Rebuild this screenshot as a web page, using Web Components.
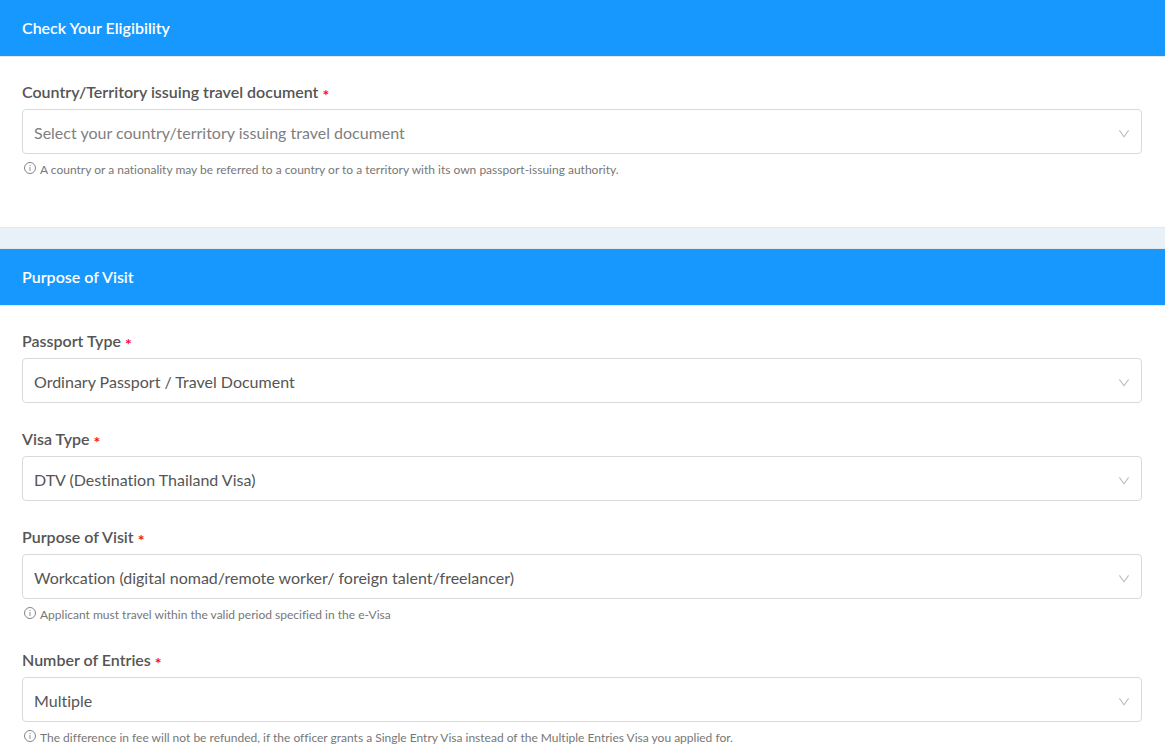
<!DOCTYPE html>
<html lang="en">
<head>
<meta charset="utf-8">
<meta name="viewport" content="width=device-width, initial-scale=1">
<title>Check Your Eligibility</title>
<style>
  body { margin: 0; background: #e8f0f8; font-family: Lato, "Noto Sans", sans-serif; font-size: 16px; font-variant-ligatures: none; color: #555; }
</style>
</head>
<body>
<visa-form>
  <form-card heading="Check Your Eligibility">
    <select-field label="Country/Territory issuing travel document" placeholder="Select your country/territory issuing travel document">A country or a nationality may be referred to a country or to a territory with its own passport-issuing authority.</select-field>
  </form-card>
  <form-card heading="Purpose of Visit">
    <select-field label="Passport Type" value="Ordinary Passport / Travel Document"></select-field>
    <select-field label="Visa Type" value="DTV (Destination Thailand Visa)"></select-field>
    <select-field label="Purpose of Visit" value="Workcation (digital nomad/remote worker/ foreign talent/freelancer)">Applicant must travel within the valid period specified in the e-Visa</select-field>
    <select-field label="Number of Entries" value="Multiple">The difference in fee will not be refunded, if the officer grants a Single Entry Visa instead of the Multiple Entries Visa you applied for.</select-field>
  </form-card>
</visa-form>

<template id="visa-form">
  <style>
    :host { display: block; }
    main { display: flex; flex-direction: column; gap: 20px; }
  </style>
  <main><slot></slot></main>
</template>

<template id="form-card">
  <style>
    :host { display: block; background: #fff; border: solid #e4e8ea; border-width: 1px 0; }
    :host(:first-of-type) { border-top: 0; }
    :host(:last-of-type) { border-bottom: 0; }
    h2 { margin: 0; padding: 0 22px; font-size: 16px; font-weight: 600; line-height: 56px; color: #fff; background: #1698ff; border-bottom: 1px solid #e8e8e8; }
    .body { padding: 20px 23px 48px 22px; display: flex; flex-direction: column; gap: 21px; }
    :host(:last-of-type) .body { padding-bottom: 6px; }
  </style>
  <section>
    <h2></h2>
    <div class="body"><slot></slot></div>
  </section>
</template>

<template id="select-field">
  <style>
    :host { display: block; }
    label { display: block; margin-bottom: 2px; font-weight: 600; line-height: 30px; color: #555; }
    .star { display: inline-block; line-height: 16px; vertical-align: -3px; color: #f5121d; font-weight: 700; }
    .control { display: grid; align-items: center; }
    .control > * { grid-area: 1 / 1; }
    select { appearance: none; box-sizing: border-box; width: 100%; height: 45px; margin: 0; padding: 1px 40px 0 11px; border: 1px solid #d9d9d9; border-radius: 4px; background: #fff; color: #555; font: inherit; font-variant-ligatures: none; }
    select.empty { color: #808080; }
    .chevron { justify-self: end; margin-right: 12px; margin-top: 4px; width: 12px; height: 12px; pointer-events: none; }
    .hint { display: flex; align-items: center; gap: 4px; height: 25px; padding: 0 2px; font-size: 12px; color: #777; }
    .hint[hidden] { display: none; }
    .hint svg { flex: none; width: 12px; height: 12px; margin-top: 3px; }
    .hint span { padding-top: 6px; }
  </style>
  <label for="control"><span class="text"></span> <span class="star">*</span></label>
  <div class="control">
    <select id="control" required aria-describedby="hint"></select>
    <svg class="chevron" viewBox="0 0 12 12" fill="none" stroke="#bfbfbf" stroke-width="1.1" aria-hidden="true"><path d="M1.4 2.4 6 8.8l4.6-6.4"/></svg>
  </div>
  <div class="hint" id="hint">
    <svg viewBox="0 0 12 12" fill="none" stroke="#777" aria-hidden="true"><circle cx="6" cy="6" r="5.5" stroke-width="0.9"/><path d="M6 5v4M6 3v1.1" stroke-width="1" stroke="#8c8c8c"/></svg>
    <span><slot></slot></span>
  </div>
</template>

<script>
  class TemplateElement extends HTMLElement {
    constructor() {
      super();
      const template = document.getElementById(this.localName);
      this.attachShadow({ mode: "open" }).append(template.content.cloneNode(true));
    }
  }
  class VisaForm extends TemplateElement {}
  class FormCard extends TemplateElement {
    connectedCallback() {
      this.shadowRoot.querySelector("h2").textContent = this.getAttribute("heading");
    }
  }
  class SelectField extends TemplateElement {
    connectedCallback() {
      const root = this.shadowRoot;
      const value = this.getAttribute("value");
      const placeholder = this.getAttribute("placeholder");
      root.querySelector(".text").textContent = this.getAttribute("label");
      const select = root.querySelector("select");
      select.replaceChildren(new Option(value ?? placeholder, value ?? "", true, true));
      select.classList.toggle("empty", value === null);
      root.querySelector(".hint").hidden = !this.textContent.trim();
    }
  }
  customElements.define("visa-form", VisaForm);
  customElements.define("form-card", FormCard);
  customElements.define("select-field", SelectField);
</script>
</body>
</html>
